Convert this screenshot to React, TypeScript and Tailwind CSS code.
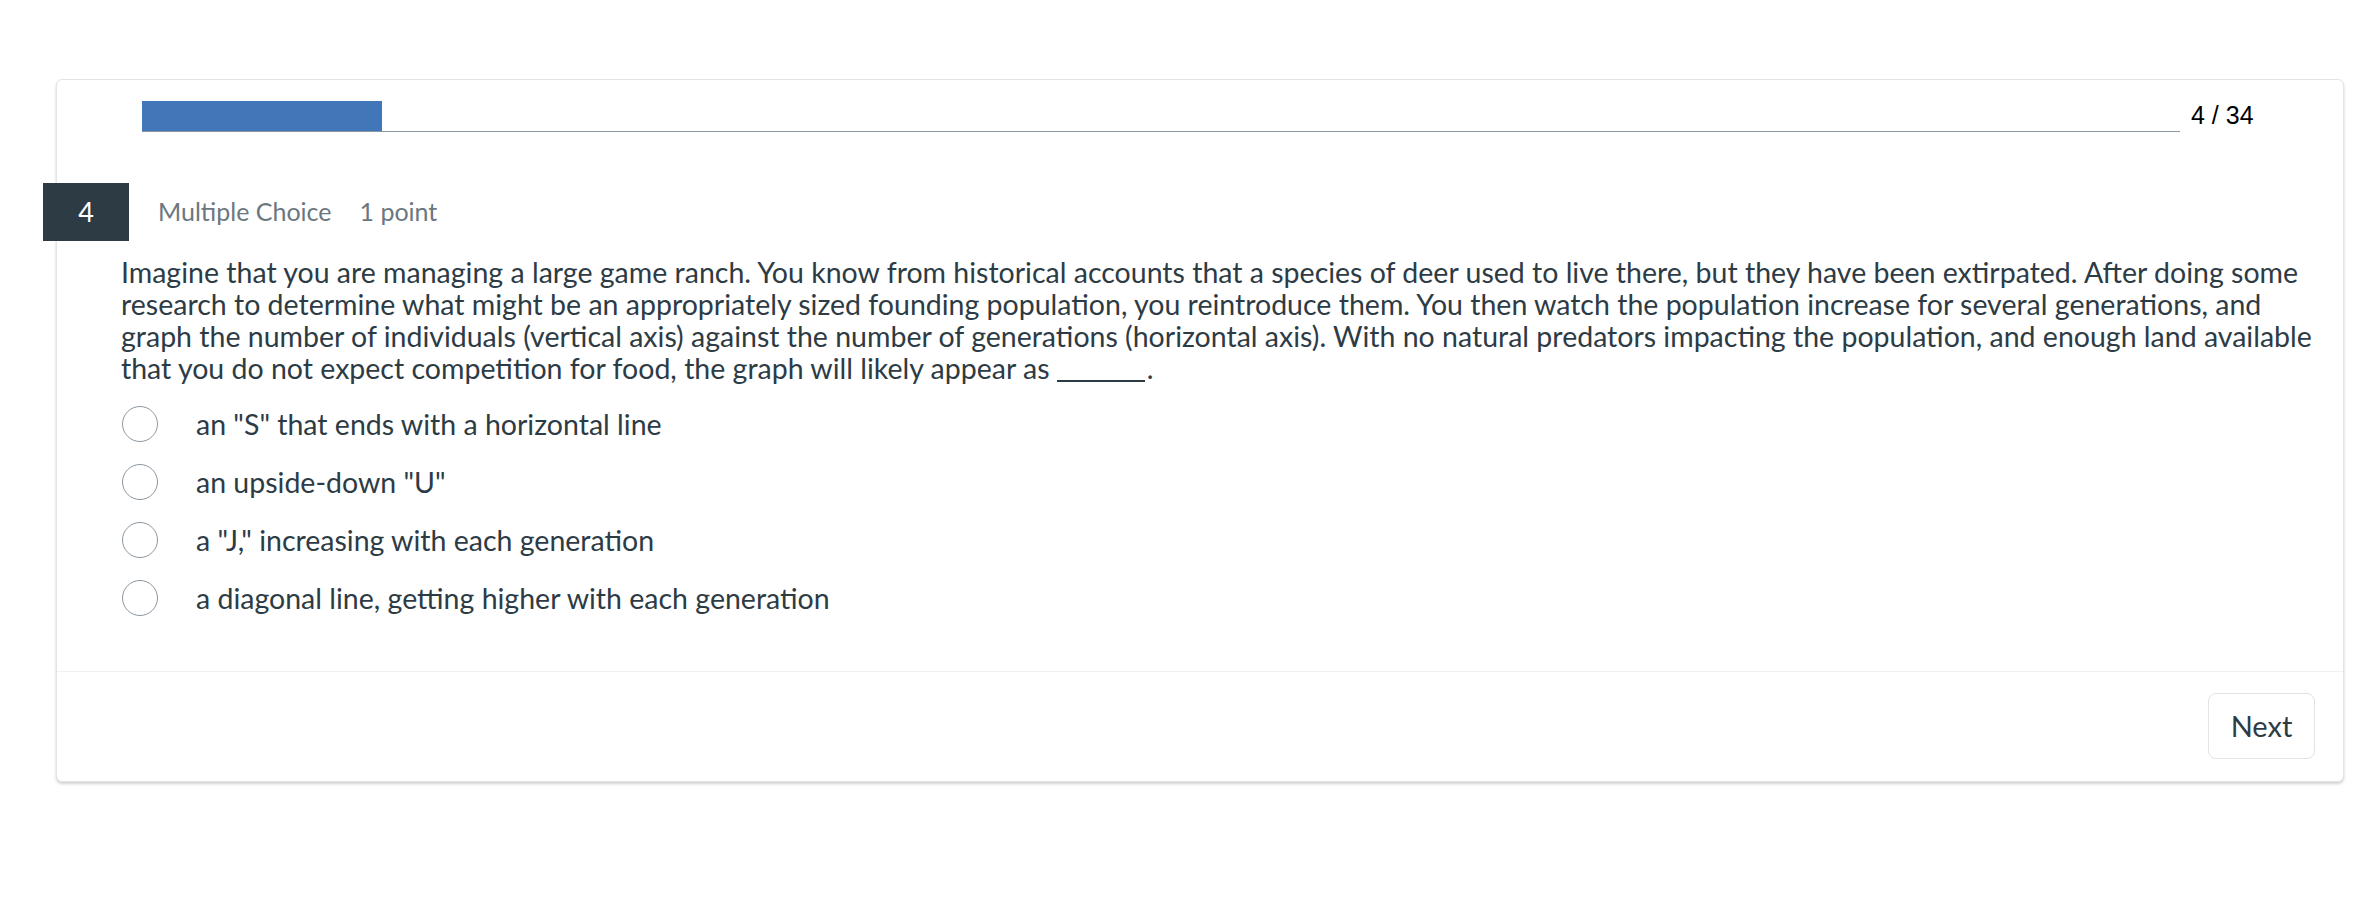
import React from "react";

const options = [
  'an "S" that ends with a horizontal line',
  'an upside-down "U"',
  'a "J," increasing with each generation',
  "a diagonal line, getting higher with each generation",
];

export default function App() {
  return (
    <div className="w-[2376px] h-[908px] bg-white pt-[79px] pl-[56px]" style={{ fontFamily: "Lato, 'Noto Sans', sans-serif" }}>
      <div className="w-[2288px] bg-white border border-[#e4e4e4] rounded-[6px] shadow-[0_2px_3px_rgba(0,0,0,0.18)]">
        {/* progress */}
        <div className="flex items-start pt-[21px] pl-[85px]">
          <div className="w-[2038px] h-[31px] border-b-[1.5px] border-[#8b96a0] flex">
            <div className="w-[240px] h-full bg-[#4177b9]" />
          </div>
          <div className="ml-[11px] text-[25px] leading-[29px] text-black" style={{ fontFamily: "'Liberation Sans', Arial, sans-serif" }}>
            4 / 34
          </div>
        </div>

        {/* header */}
        <div className="flex items-center mt-[51px] ml-[-14px]">
          <div className="w-[86px] h-[58px] bg-[#2d3b45] text-white text-[27px] flex items-center justify-center">4</div>
          <div className="ml-[29px] text-[25px] text-[#6b7780] flex gap-[28px]">
            <span>Multiple Choice</span>
            <span>1 point</span>
          </div>
        </div>

        {/* question */}
        <div className="mt-[15px] pl-[64px] w-[2276px] text-[28.5px] leading-[32px] text-[#2d3b45]">
          Imagine that you are managing a large game ranch. You know from historical accounts that a species of deer used to live there, but they have been extirpated. After doing some research to determine what might be an appropriately sized founding population, you reintroduce them. You then watch the population increase for several generations, and graph the number of individuals (vertical axis) against the number of generations (horizontal axis). With no natural predators impacting the population, and enough land available that you do not expect competition for food, the graph will likely appear as{" "}
          <span className="inline-block w-[88px] h-[2px] bg-[#2d3b45] align-[-3px] mr-[2px]" />.
        </div>

        {/* options */}
        <div className="mt-[11px] pl-[65px] pb-[44px]">
          {options.map((o) => (
            <div key={o} className="h-[58px] flex items-center">
              <div className="w-[36px] h-[36px] rounded-full border-[1.5px] border-[#8b96a0] bg-white shrink-0" />
              <div className="ml-[38px] text-[28.5px] text-[#2d3b45]">{o}</div>
            </div>
          ))}
        </div>

        {/* footer */}
        <div className="border-t border-[#f0f0f0] flex justify-end pt-[21px] pb-[22px] pr-[28px]">
          <button className="w-[107px] h-[66px] border border-[#e3e3e3] rounded-[8px] bg-white text-[29px] text-[#2d3b45]">
            Next
          </button>
        </div>
      </div>
    </div>
  );
}
